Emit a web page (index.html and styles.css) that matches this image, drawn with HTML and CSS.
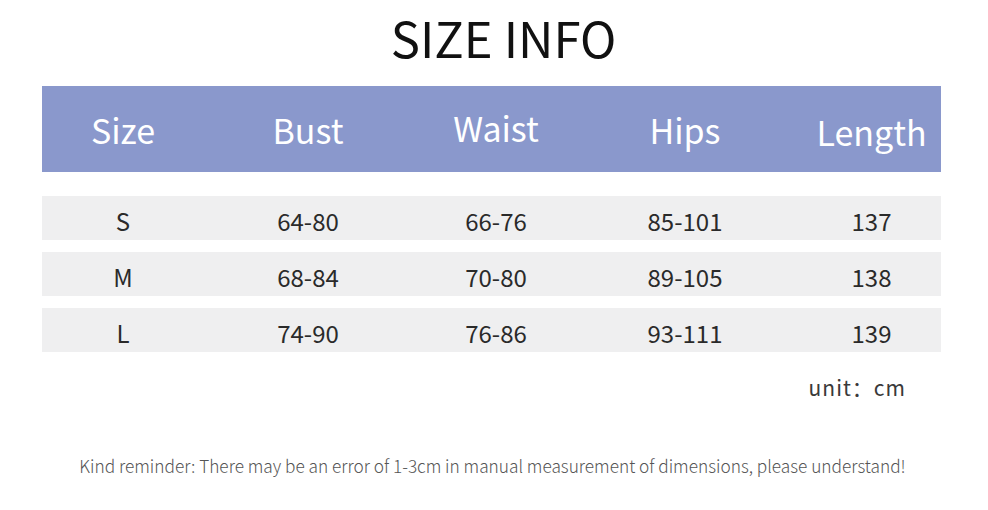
FILE: index.html
```html
<!DOCTYPE html>
<html>
<head>
<meta charset="utf-8">
<link rel="stylesheet" href="styles.css">
</head>
<body>
<div class="page">
  <h1 class="title">SIZE INFO</h1>
  <div class="table">
    <div class="row head">
      <div class="cell">Size</div>
      <div class="cell">Bust</div>
      <div class="cell waist">Waist</div>
      <div class="cell">Hips</div>
      <div class="cell last length">Length</div>
    </div>
    <div class="body">
      <div class="row data">
        <div class="cell">S</div>
        <div class="cell">64-80</div>
        <div class="cell">66-76</div>
        <div class="cell">85-101</div>
        <div class="cell last">137</div>
      </div>
      <div class="row data">
        <div class="cell">M</div>
        <div class="cell">68-84</div>
        <div class="cell">70-80</div>
        <div class="cell">89-105</div>
        <div class="cell last">138</div>
      </div>
      <div class="row data">
        <div class="cell">L</div>
        <div class="cell">74-90</div>
        <div class="cell">76-86</div>
        <div class="cell">93-111</div>
        <div class="cell last">139</div>
      </div>
    </div>
    <div class="unit">unit：cm</div>
  </div>
  <p class="note">Kind reminder: There may be an error of 1-3cm in manual measurement of dimensions, please understand!</p>
</div>
</body>
</html>
```
FILE: styles.css
```css
html, body {
  margin: 0;
  padding: 0;
  background: #ffffff;
}
body {
  font-family: "Noto Sans CJK SC", "Noto Sans", sans-serif;
  width: 988px;
  height: 510px;
  overflow: hidden;
}
.page {
  display: flex;
  flex-direction: column;
  align-items: center;
}
.title {
  margin: 12px 0 0 0;
  font-size: 49px;
  line-height: 49px;
  font-weight: 400;
  color: #111111;
  padding-left: 19px;
}
.table {
  align-self: flex-start;
  width: 899px;
  margin-top: 25px;
  margin-left: 42px;
}
.row {
  display: grid;
  grid-template-columns: 162px 208px 168px 210px 151px;
  align-items: center;
  box-sizing: border-box;
}
.cell {
  text-align: center;
  line-height: 1;
}
.cell.last {
  padding-left: 12px;
}
.head {
  height: 86px;
  background: #8a98cc;
  color: #ffffff;
  font-size: 34px;
  padding-top: 1px;
}
.head .waist {
  margin-top: -4px;
}
.head .length {
  margin-top: 4px;
}
.body {
  margin-top: 24px;
  display: flex;
  flex-direction: column;
  gap: 12px;
}
.data {
  height: 44px;
  background: #efeff0;
  color: #2a2a2a;
  font-size: 24px;
  padding-top: 5px;
}
.unit {
  margin-top: 25px;
  text-align: right;
  padding-right: 35px;
  font-size: 21px;
  line-height: 20px;
  letter-spacing: 1px;
  color: #3a3a3a;
}
.note {
  margin: 60px 0 0 0;
  padding-right: 3px;
  font-size: 17.25px;
  line-height: 17px;
  font-weight: 300;
  color: #555555;
}
```
